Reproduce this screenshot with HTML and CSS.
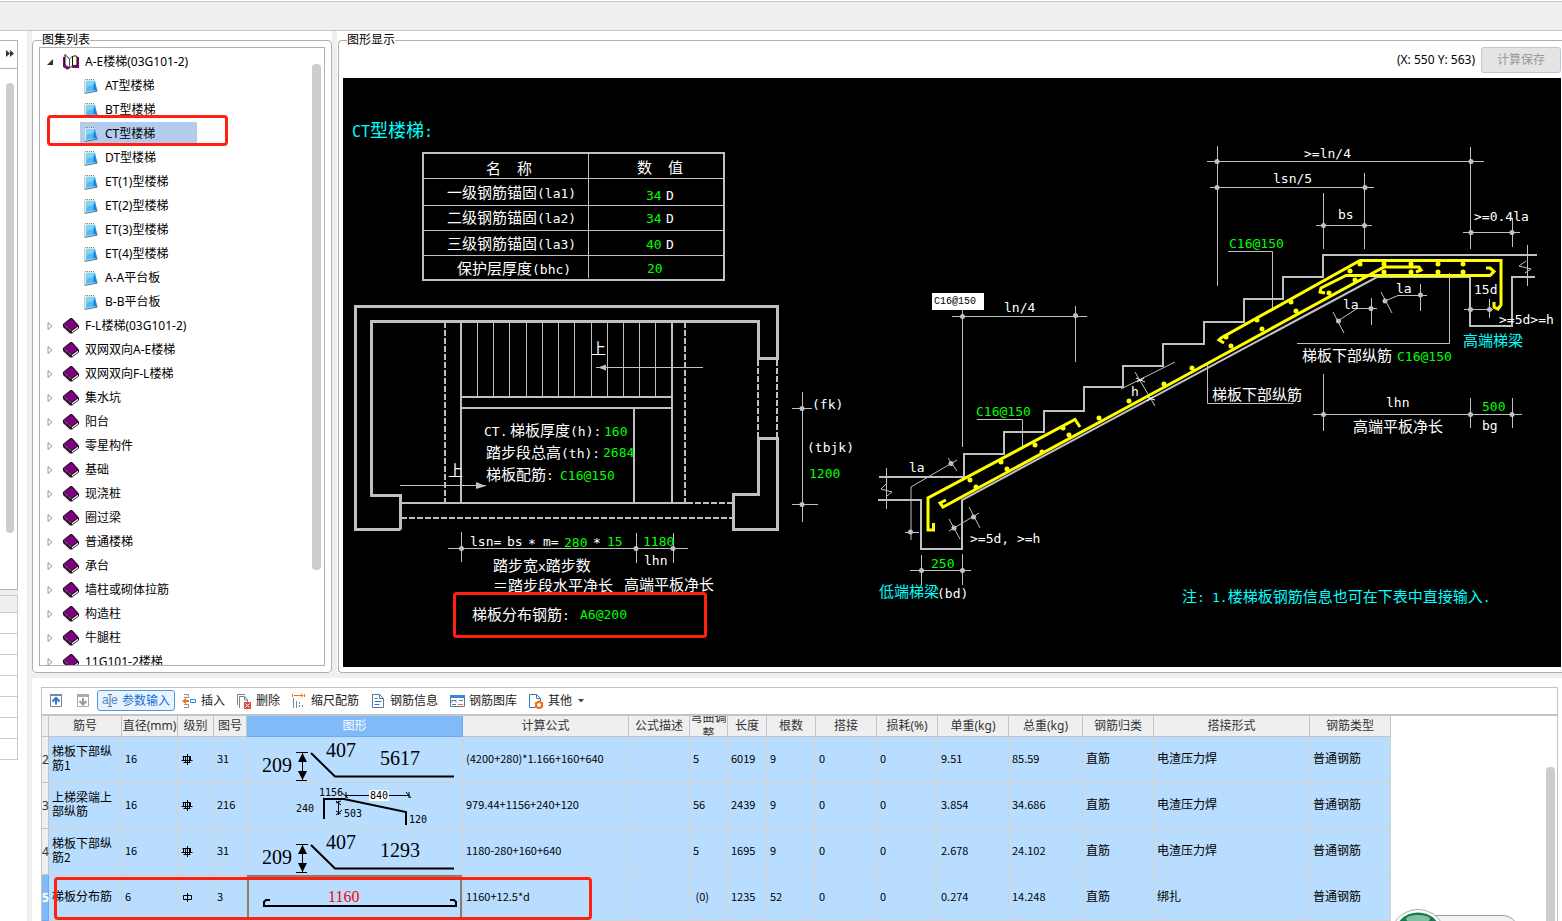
FILE: index.html
```html
<!DOCTYPE html>
<html lang="zh-CN">
<head>
<meta charset="utf-8">
<title>图集列表</title>
<link rel="stylesheet" href="styles.css">
</head>
<body>
<svg class="defs" aria-hidden="true">
  <symbol id="book" viewBox="0 0 16 16">
    <path d="M0 6L7.500 0h1.500L16 7.500v2.500l-7 5.500H7L0 9z" fill="#111"/>
    <path d="M1 6L8 .8l7 6.700-6.500 4.500z" fill="#800080"/>
    <path d="M1 7.500l7 6.500v1L1 8.800z" fill="#800080"/>
    <path d="M9 13l6-4.500v1.500L9 14.500z" fill="#fff"/>
    <path d="M1.500 7L8.500 13" stroke="#ccc" stroke-dasharray="1 1" fill="none"/>
  </symbol>
  <symbol id="bookopen" viewBox="0 0 16 16">
    <path d="M0 3h2v9l4 1 4-2 1 1h3V3h2v11h-6l-2-1-3 2.500H4L0 13z" fill="#800080"/>
    <path d="M2 .5L6.500 5v9L2 11z" fill="#fff" stroke="#111"/>
    <path d="M6.500 5q2-3 4-2.500v9.500q-2-.5-4 2z" fill="#fff" stroke="#555"/>
    <path d="M9.500 2.500q2.500-1.500 4.500 0v9.500q-2.500-1.500-4.500 0z" fill="#ffffc8" stroke="#111"/>
  </symbol>
  <symbol id="note" viewBox="0 0 14 16">
    <path d="M.5 1.500h10L13.500 12.500 1 15.500z" fill="#d5eaf2"/>
    <path d="M2.500 3h8.500l2 9.500L2 14z" fill="#4fbcf2"/>
    <path d="M2.500 3h8l.5 3-8.500 3z" fill="#86d3f5"/>
    <path d="M10.500 3l3 10-4.500-1.500z" fill="#2286d8"/>
    <path d="M.5 3v12" stroke="#b9d8b0"/>
    <path d="M1 1.500h10" stroke="#927d55" stroke-dasharray="1 1"/>
    <path d="M.5 15.300l3-.3 10-2" stroke="#447085" fill="none"/>
  </symbol>
  <symbol id="g3" viewBox="0 0 12 12"><path d="M2.500 3.500h7v4h-7zM.5 7.500h11M1.500 3.500h8M6.500 1v11M4.500 3v7M8.500 3v7M2.500 9.500h7" fill="none" stroke="#000"/></symbol>
  <symbol id="g1" viewBox="0 0 12 12"><path d="M2.500 4.500h8v4h-8zM6.500 2v9" fill="none" stroke="#000"/></symbol>
  <symbol id="slab" viewBox="0 0 215 45">
    <path d="M49 15.500h12M49 43.500h11M55.500 16v27" stroke="#000" fill="none"/>
    <path d="M55.500 16l4.500 9h-9zM55.500 43l4.500-9h-9z"/>
    <path d="M64 16l24 23.500h119" stroke="#000" stroke-width="2" fill="none"/>
  </symbol>
</svg>

<header class="topbar"></header>
<div class="workspace">
  <nav class="strip">
    <button class="expand" aria-label="展开"><svg width="8" height="7"><path d="M0 0l4 3.500L0 7zM4 0l4 3.500L4 7z" fill="#333"/></svg></button>
    <div class="striplist"><i class="thumb"></i></div>
    <div class="striprows"><i></i><i></i><i></i><i></i><i></i><i></i><i></i><i></i></div>
  </nav>
  <main class="main">
    <div class="upper">
      <aside class="side">
        <fieldset class="group">
          <legend>图集列表</legend>
          <div class="tree">
            <ul>
              <li class="open"><svg class="tw" viewBox="0 0 8 8"><path d="M7 1v6H1z" fill="#333"/></svg><svg class="bk"><use href="#bookopen"/></svg>A-E楼梯(03G101-2)</li>
              <li class="leaf"><svg><use href="#note"/></svg>AT型楼梯</li>
              <li class="leaf"><svg><use href="#note"/></svg>BT型楼梯</li>
              <li class="leaf selected"><svg><use href="#note"/></svg>CT型楼梯</li>
              <li class="leaf"><svg><use href="#note"/></svg>DT型楼梯</li>
              <li class="leaf"><svg><use href="#note"/></svg>ET(1)型楼梯</li>
              <li class="leaf"><svg><use href="#note"/></svg>ET(2)型楼梯</li>
              <li class="leaf"><svg><use href="#note"/></svg>ET(3)型楼梯</li>
              <li class="leaf"><svg><use href="#note"/></svg>ET(4)型楼梯</li>
              <li class="leaf"><svg><use href="#note"/></svg>A-A平台板</li>
              <li class="leaf"><svg><use href="#note"/></svg>B-B平台板</li>
              <li><svg class="tw" viewBox="0 0 8 8"><path d="M2 .5v7L6 4z" fill="none" stroke="#999"/></svg><svg class="bk"><use href="#book"/></svg>F-L楼梯(03G101-2)</li>
              <li><svg class="tw" viewBox="0 0 8 8"><path d="M2 .5v7L6 4z" fill="none" stroke="#999"/></svg><svg class="bk"><use href="#book"/></svg>双网双向A-E楼梯</li>
              <li><svg class="tw" viewBox="0 0 8 8"><path d="M2 .5v7L6 4z" fill="none" stroke="#999"/></svg><svg class="bk"><use href="#book"/></svg>双网双向F-L楼梯</li>
              <li><svg class="tw" viewBox="0 0 8 8"><path d="M2 .5v7L6 4z" fill="none" stroke="#999"/></svg><svg class="bk"><use href="#book"/></svg>集水坑</li>
              <li><svg class="tw" viewBox="0 0 8 8"><path d="M2 .5v7L6 4z" fill="none" stroke="#999"/></svg><svg class="bk"><use href="#book"/></svg>阳台</li>
              <li><svg class="tw" viewBox="0 0 8 8"><path d="M2 .5v7L6 4z" fill="none" stroke="#999"/></svg><svg class="bk"><use href="#book"/></svg>零星构件</li>
              <li><svg class="tw" viewBox="0 0 8 8"><path d="M2 .5v7L6 4z" fill="none" stroke="#999"/></svg><svg class="bk"><use href="#book"/></svg>基础</li>
              <li><svg class="tw" viewBox="0 0 8 8"><path d="M2 .5v7L6 4z" fill="none" stroke="#999"/></svg><svg class="bk"><use href="#book"/></svg>现浇桩</li>
              <li><svg class="tw" viewBox="0 0 8 8"><path d="M2 .5v7L6 4z" fill="none" stroke="#999"/></svg><svg class="bk"><use href="#book"/></svg>圈过梁</li>
              <li><svg class="tw" viewBox="0 0 8 8"><path d="M2 .5v7L6 4z" fill="none" stroke="#999"/></svg><svg class="bk"><use href="#book"/></svg>普通楼梯</li>
              <li><svg class="tw" viewBox="0 0 8 8"><path d="M2 .5v7L6 4z" fill="none" stroke="#999"/></svg><svg class="bk"><use href="#book"/></svg>承台</li>
              <li><svg class="tw" viewBox="0 0 8 8"><path d="M2 .5v7L6 4z" fill="none" stroke="#999"/></svg><svg class="bk"><use href="#book"/></svg>墙柱或砌体拉筋</li>
              <li><svg class="tw" viewBox="0 0 8 8"><path d="M2 .5v7L6 4z" fill="none" stroke="#999"/></svg><svg class="bk"><use href="#book"/></svg>构造柱</li>
              <li><svg class="tw" viewBox="0 0 8 8"><path d="M2 .5v7L6 4z" fill="none" stroke="#999"/></svg><svg class="bk"><use href="#book"/></svg>牛腿柱</li>
              <li><svg class="tw" viewBox="0 0 8 8"><path d="M2 .5v7L6 4z" fill="none" stroke="#999"/></svg><svg class="bk"><use href="#book"/></svg>11G101-2楼梯</li>
            </ul>
            <i class="thumb treethumb"></i>
            <i class="mark marktree"></i>
          </div>
        </fieldset>
      </aside>
      <section class="view">
        <fieldset class="group viewgroup">
          <legend>图形显示</legend>
          <div class="viewhead"><output>(X: 550 Y: 563)</output><button class="save" disabled>计算保存</button></div>
          <svg class="cad" viewBox="343 78 1218 589">
            <rect x="343" y="78" width="1218" height="589" fill="#000"/>
            <g class="w3">
              <path d="M400.500 529.500h-45v-223h422v52h-19v-37h-387v174h29v34"/>
              <path d="M758.500 438.500h19v91h-44v-35h25z"/>
            </g>
            <g class="w2">
              <path d="M423 153h301v127H423z"/>
              <path d="M461 322v180M672 322v180M461 397h211M461 408h211M634 408v94M401 503h286"/>
              <path d="M445 322v180M685 322v180M758 360v78M777 360v78M401 518h332M687 503h46" stroke-dasharray="6 2"/>
              <path d="M879 477h85v-23h40v-22h40v-21h40v-24h39v-21h40v-22h41v-22h40v-23h39v-22h40v-22h214"/>
              <path d="M878 500h43v49h41v-49L1377 277h93v49h42v-49h23"/>
            </g>
            <g class="w1">
              <path d="M588.500 153v125M424 178.500h299M424 205.500h299M424 230.500h299M424 255.500h299"/>
              <path d="M477.500 322v74M493.500 322v74M509.500 322v74M526.500 322v74M542.500 322v74M558.500 322v74M574.500 322v74M591.500 322v74M607.500 322v74M623.500 322v74M639.500 322v74M655.500 322v74"/>
              <path d="M596 367.500h107M400 485.500h86"/>
              <path d="M448 548.500h240M461.500 532v30M636.500 533v30M673.500 533v30"/>
              <path d="M802.500 392v130M792 408.500h20M792 504.500h26"/>
              <path d="M952 316.500h135M962.500 310v137M1075.500 306v56"/>
              <path d="M886.500 468v41M886 484l-5 5 11 3-5 4M1527.500 245v41M1526 261l-7 5 12 3-6 4"/>
              <path d="M957 460l-46 27v53M948 458l9 13M905 532.500h14"/>
              <path d="M977 419.500h45.500V446M1121 389l54-27M1135 372l20 34"/>
              <path d="M949 531l30-18M949 519l11 20M969 507l11 21"/>
              <path d="M910 570.500h61M921.500 555v30M962.500 554v31"/>
              <path d="M1207 161.500h277M1217.500 146v140M1470.500 147v102M1210 187.500h164M1364.500 173v76"/>
              <path d="M1316 225.500h56M1323.500 193v56M1463 232.500h57M1512.500 218v29"/>
              <path d="M1228 251.500h44.500V308M1464 309.500h29M1489.500 299v19"/>
              <path d="M1385 301l13-5.500h29M1381 292l11 21M1420.500 284v27"/>
              <path d="M1338 321l19-12.500h20M1333 312l11 21M1371.500 298v27"/>
              <path d="M1297 343.500h152.500V273M1207.500 365v38.500h86"/>
              <path d="M1313 414.500h209M1323.500 374v57M1470.500 398v30M1512.500 398v30"/>
            </g>
            <path class="dots" d="M461.500 548.500h0M636 548.500h0M673 548.500h0M802 408.500h0M802 504.500h0M962.500 316.500h0M1075.500 315.500h0M951 463.500h0M910.500 532h0M954 528h0M973.500 517h0M921.500 570.500h0M962.500 570.500h0M1217 161.500h0M1471 161.500h0M1217 187.500h0M1365 187.500h0M1323.500 225.500h0M1364.500 225.500h0M1471 232.500h0M1512 232.500h0M1470.500 309.500h0M1489.500 309.500h0M1385 301h0M1420.500 295h0M1338.500 321h0M1371 308.500h0M1323.500 414.500h0M1470.500 414.500h0M1512 414.500h0"/>
            <path class="arrows" d="M598 367.500l8-3v6zM486 486l-10-4v7z"/>
            <path d="M1136 378l9 4M1137 382l7-4M1146 397l9 3M1147 401l6-4" stroke="#fff" fill="none"/>
            <g class="bars">
              <path d="M933.500 523v7H928v-32l147-78.500 5 7.500"/>
              <path d="M946 500l-6 3 3 4 227-123 214-117h35l2 3-5 2"/>
              <path d="M1224 343l-5-3 2-2L1360 260.500h141V305l-3 4-4-2v-5"/>
              <path d="M1325 293l-5-1 1-4 25-12.500h144l4-4-4-3.500h-4"/>
            </g>
            <path class="studs" d="M970 480h0M1001 462h0M1035 445h0M1063 428h0M976 487h0M1007 469h0M1042 452h0M1069 435h0M1099 418h0M1129 401h0M1164 384h0M1192 368h0M1231 346h0M1262 329h0M1296 311h0M1329 293h0M1355 280h0M1226 337h0M1257 320h0M1291 302h0M1360 264h0M1350 271h0M1384 264h0M1384 272h0M1411 264h0M1411 272h0M1438 264h0M1438 272h0M1463 264h0M1463 272h0"/>

            <g class="cyan">
              <text class="big" x="352" y="137"><tspan class="bl">CT</tspan>型楼梯<tspan class="bl">:</tspan></text>
              <text x="1463" y="346">高端梯梁</text>
              <text x="879" y="597">低端梯梁</text>
              <text x="1182" y="602">注<tspan class="l">: </tspan></text>
              <text x="1212" y="602"><tspan class="l">1.</tspan>楼梯板钢筋信息也可在下表中直接输入<tspan class="l">.</tspan></text>
            </g>
            <g class="white">
              <text x="486" y="174">名</text><text x="517" y="174">称</text><text x="637" y="173">数</text><text x="668" y="173">值</text>
              <text x="447" y="198">一级钢筋锚固<tspan class="l">(la1)</tspan></text>
              <text x="447" y="223">二级钢筋锚固<tspan class="l">(la2)</tspan></text>
              <text x="447" y="249">三级钢筋锚固<tspan class="l">(la3)</tspan></text>
              <text x="457" y="274">保护层厚度<tspan class="l">(bhc)</tspan></text>
              <text x="591" y="354">上</text><text x="448" y="476">上</text>
              <text x="484" y="436"><tspan class="l">CT.</tspan></text>
              <text x="510" y="436">梯板厚度<tspan class="l">(h):</tspan></text>
              <text x="486" y="458">踏步段总高<tspan class="l">(th):</tspan></text>
              <text x="486" y="480">梯板配筋<tspan class="l">:</tspan></text>
              <text x="493" y="571">踏步宽<tspan class="l">x</tspan>踏步数</text>
              <text x="493" y="591">＝踏步段水平净长</text>
              <text x="624" y="590">高端平板净长</text>
              <text x="472" y="620">梯板分布钢筋<tspan class="l">:</tspan></text>
              <text x="1302" y="361">梯板下部纵筋</text>
              <text x="1212" y="400">梯板下部纵筋</text>
              <text x="1353" y="432">高端平板净长</text>
            </g>
            <g class="white latin">
              <text x="666" y="200">D</text><text x="666" y="223">D</text><text x="666" y="249">D</text>
              <text x="470" y="546">lsn=</text><text x="507" y="546">bs</text><text x="528" y="548">*</text><text x="543" y="546">m=</text><text x="593" y="547">*</text><text x="644" y="565">lhn</text>
              <text x="812" y="409">(fk)</text><text x="807" y="452">(tbjk)</text>
              <text x="1004" y="312">ln/4</text><text x="909" y="472">la</text><text x="1131" y="396">h</text>
              <text x="970" y="543">&gt;=5d, &gt;=h</text><text x="937" y="598">(bd)</text>
              <text x="1304" y="158">&gt;=ln/4</text><text x="1273" y="183">lsn/5</text><text x="1338" y="219">bs</text><text x="1474" y="221">&gt;=0.4la</text>
              <text x="1474" y="294">15d</text><text x="1499" y="324">&gt;=5d&gt;=h</text><text x="1396" y="293">la</text><text x="1343" y="309">la</text>
              <text x="1386" y="407">lhn</text><text x="1482" y="430">bg</text>
            </g>
            <g class="green latin">
              <text x="646" y="200">34</text><text x="646" y="223">34</text><text x="646" y="249">40</text><text x="647" y="273">20</text>
              <text x="604" y="436">160</text><text x="603" y="457">2684</text><text x="560" y="480">C16@150</text>
              <text x="564" y="547">280</text><text x="607" y="546">15</text><text x="643" y="546">1180</text>
              <text x="580" y="619">A6@200</text><text x="809" y="478">1200</text>
              <text x="976" y="416">C16@150</text><text x="931" y="568">250</text>
              <text x="1229" y="248">C16@150</text><text x="1397" y="361">C16@150</text><text x="1482" y="411">500</text>
            </g>
            <rect x="454.500" y="593.500" width="251" height="43" rx="2" fill="none" stroke="#ff2010" stroke-width="3"/>
            <foreignObject x="932" y="293" width="52" height="17"><input class="cadinput" aria-label="配筋" value="C16@150"></foreignObject>
          </svg>
        </fieldset>
      </section>
    </div>
    <section class="lower">
      <div class="gridbox">
        <div class="toolbar">
          <button aria-label="上移"><svg viewBox="0 0 16 16"><path d="M2.500 1.500h11v12h-11z" fill="#fff" stroke="#7d8a99"/><path d="M2 1h12v2H2z" fill="#7d8a99"/><path d="M8 11.500V6M4.500 8.500L8 5l3.500 3.500" stroke="#2878d0" stroke-width="2" fill="none"/></svg></button>
          <button aria-label="下移"><svg viewBox="0 0 16 16"><path d="M2.500 1.500h11v12h-11z" fill="#fff" stroke="#aaa"/><path d="M2 1h12v3H2z" fill="#aaa"/><path d="M8 5v6M4.500 8L8 11.500 11.500 8" stroke="#999" stroke-width="2" fill="none"/></svg></button>
          <button class="on"><svg viewBox="0 0 16 16"><text x="0" y="11" class="ae">a</text><text x="9" y="11" class="ae">e</text><path d="M6 1.500h1.500l.5.500.5-.5H10M8 2v11M6 13.500h1.500L8 13l.5.500H10" stroke="#667" fill="none"/></svg>参数输入</button>
          <button><svg viewBox="0 0 16 16"><path d="M3 1.500h4.500v3H3M3 14.500h4.500v-3H3" stroke="#8793a0" fill="none"/><path d="M1 8l4-3v2h3v2H5v2z" fill="#f07020"/><path d="M9.500 6.500h5v3h-5z" fill="#fff" stroke="#3a85d5"/></svg>插入</button>
          <button><svg viewBox="0 0 16 16"><path d="M1.500 12V1.500H9M4 14.500h-.5v-11h5l3 3V9M8.500 4v3h3" stroke="#778390" fill="none"/><path d="M8 9h7v7H8z" fill="#d84848"/><path d="M9.500 10.500l4 4m0-4l-4 4" stroke="#fff"/></svg>删除</button>
          <button><svg viewBox="0 0 16 16"><path d="M3 2.500h9M10 .5l2 2-2 2" stroke="#f07020" fill="none"/><path d="M1.500 1v3M13.500 1v3" stroke="#f07020"/><path d="M2.500 5v10M5.500 8v7" stroke="#778390"/><path d="M8.500 9v6M11.500 12v3" stroke="#778390" stroke-dasharray="2 1"/></svg>缩尺配筋</button>
          <button><svg viewBox="0 0 16 16"><path d="M2.500 1.500h7l4 4v9h-11zM9.500 1.500v4h4" stroke="#607790" fill="#fff"/><path d="M4.500 5.500h3M4.500 8.500h7M4.500 11.500h5" stroke="#2878d0"/></svg>钢筋信息</button>
          <button><svg viewBox="0 0 16 16"><path d="M1.500 2.500h14v11h-14z" fill="#fff" stroke="#4a7ab0"/><path d="M1 2h15v3H1z" fill="#3a85d5"/><path d="M3 9.500v-2h4v2M10 7.500h4" stroke="#4a7ab0" fill="none"/><path d="M3 11.500h4" stroke="#3a3"/><path d="M9 11.500h5" stroke="#f07020"/></svg>钢筋图库</button>
          <button><svg viewBox="0 0 16 16"><path d="M7 14.500H1.500v-13h7l4 4V8M8.500 1.500v4h4" stroke="#3878c0" fill="#fff"/><circle cx="11" cy="12" r="3" fill="#fff" stroke="#f07020" stroke-width="2"/><path d="M11 7.500v2M11 14.500v2M7 9.800l2 1M13 13l2 1M7 14.200l2-1M13 11l2-1" stroke="#f07020" stroke-width="2"/></svg>其他<svg class="caret" viewBox="0 0 6 4"><path d="M0 0h6L3 3.500z" fill="#444"/></svg></button>
        </div>
        <table>
          <colgroup><col><col><col><col><col><col><col><col><col><col><col><col><col><col><col><col><col><col></colgroup>
          <thead><tr><th></th><th>筋号</th><th>直径(mm)</th><th>级别</th><th>图号</th><th class="on">图形</th><th>计算公式</th><th>公式描述</th><th><div>弯曲调整</div></th><th>长度</th><th>根数</th><th>搭接</th><th>损耗(%)</th><th>单重(kg)</th><th>总重(kg)</th><th>钢筋归类</th><th>搭接形式</th><th>钢筋类型</th></tr></thead>
          <tbody>
            <tr><th>2</th><td class="name">梯板下部纵筋1</td><td>16</td><td><svg class="grade"><use href="#g3"/></svg></td><td>31</td><td class="shape"><svg viewBox="0 0 215 45"><use href="#slab"/><text x="15" y="35">209</text><text x="79" y="20">407</text><text x="133" y="28">5617</text></svg></td><td>(4200+280)*1.166+160+640</td><td></td><td>5</td><td>6019</td><td>9</td><td>0</td><td>0</td><td>9.51</td><td>85.59</td><td class="name">直筋</td><td class="name">电渣压力焊</td><td class="name">普通钢筋</td></tr>
            <tr><th>3</th><td class="name">上梯梁端上部纵筋</td><td>16</td><td><svg class="grade"><use href="#g3"/></svg></td><td>216</td><td class="shape"><svg class="small" viewBox="0 0 215 45"><path d="M77 36V16h20l62 13v13" stroke="#000" stroke-width="2" fill="none"/><path d="M98 12.500h64M95 10l6 5M99 9v6M159 9l5 6M162 15v-6M91.500 18v14M89 20l5-2M89 32l6-5M89 28l5 3M89 18l5 4" stroke="#000" fill="none"/><rect x="122" y="7" width="20" height="11" fill="#fff"/><text x="72" y="13">1156</text><text x="123" y="16">840</text><text x="49" y="29">240</text><text x="97" y="34">503</text><text x="162" y="40">120</text></svg></td><td>979.44+1156+240+120</td><td></td><td>56</td><td>2439</td><td>9</td><td>0</td><td>0</td><td>3.854</td><td>34.686</td><td class="name">直筋</td><td class="name">电渣压力焊</td><td class="name">普通钢筋</td></tr>
            <tr><th>4</th><td class="name">梯板下部纵筋2</td><td>16</td><td><svg class="grade"><use href="#g3"/></svg></td><td>31</td><td class="shape"><svg viewBox="0 0 215 45"><use href="#slab"/><text x="15" y="35">209</text><text x="79" y="20">407</text><text x="133" y="28">1293</text></svg></td><td>1180-280+160+640</td><td></td><td>5</td><td>1695</td><td>9</td><td>0</td><td>0</td><td>2.678</td><td>24.102</td><td class="name">直筋</td><td class="name">电渣压力焊</td><td class="name">普通钢筋</td></tr>
            <tr><th class="on">5</th><td class="name">梯板分布筋</td><td>6</td><td><svg class="grade"><use href="#g1"/></svg></td><td>3</td><td class="shape focus"><svg class="red" viewBox="0 0 215 45"><path d="M23 25h-4l-2 2v4h192v-4l-2-2h-4" stroke="#000" stroke-width="2" fill="none"/><text x="81" y="27">1160</text></svg></td><td>1160+12.5*d</td><td></td><td>&nbsp;(0)</td><td>1235</td><td>52</td><td>0</td><td>0</td><td>0.274</td><td>14.248</td><td class="name">直筋</td><td class="name">绑扎</td><td class="name">普通钢筋</td></tr>
          </tbody>
        </table>
        <i class="thumb gridthumb"></i>
        <i class="mark markgrid"></i>
      </div>
      <svg class="ball" viewBox="0 0 130 12">
        <path d="M30 6.500h77q8 0 13 6H30z" fill="#f3f3f3" stroke="#999"/>
        <circle cx="23" cy="28" r="27.500" fill="#fff" stroke="#aaa"/>
        <circle cx="23" cy="28" r="24.500" fill="#157a50"/>
        <ellipse cx="23" cy="10" rx="12" ry="4" fill="#7fc0a0"/>
      </svg>
    </section>
  </main>
</div>
</body>
</html>
```
FILE: styles.css
```css
* { box-sizing: border-box; }
body {
  margin: 0;
  height: 100vh;
  overflow: hidden;
  display: flex;
  flex-direction: column;
  background: #efefef;
  color: #000;
  font: 12px/14px "Noto Sans", "Noto Sans CJK SC", sans-serif;
}
button, input { font: inherit; }
.defs { position: absolute; width: 0; height: 0; }

.topbar {
  flex: none;
  height: 31px;
  border-top: 1px solid #fff;
  border-bottom: 1px solid #c3c3c8;
  box-shadow: inset 0 1px #c3c3c8;
}
.workspace { flex: 1; min-height: 0; display: flex; gap: 5px; }

.strip {
  flex: none;
  width: 27px;
  padding: 9px 9px 0 0;
  background: #fff;
  display: flex;
  flex-direction: column;
}
.expand {
  height: 29px;
  padding: 0 3px 4px 0;
  border: 1px solid #b4b4b4;
  border-left: 0;
  background: #fff;
  text-align: right;
}
.striplist {
  height: 521px;
  padding: 14px 3px 0 6px;
  border: 1px solid #b4b4b4;
  border-width: 0 1px 1px 0;
}
.thumb { display: block; width: 9px; background: #cdcdcd; border-radius: 4px; }
.striplist .thumb { width: 8px; height: 450px; }
.striprows { border-top: 5px solid #efefef; }
.striprows i {
  display: block;
  height: 21px;
  border: 1px solid #ccc;
  border-width: 0 1px 1px 0;
}
.striprows i:first-child { height: 18px; background: #efefef; border-top-width: 1px; }

.main { flex: 1; min-width: 0; display: flex; flex-direction: column; gap: 5px; }
.upper { flex: none; display: grid; grid-template-columns: 300px 1fr; gap: 5px; }
.side, .view { background: #fff; padding-top: 2px; display: flex; flex-direction: column; }
.side { contain: size; }
.view { padding-left: 1px; }
.group {
  flex: 1;
  min-width: 0;
  min-height: 0;
  margin: 0;
  padding: 0 6px 6px;
  border: 1px solid #b0b0b0;
  border-radius: 4px;
  display: flex;
  flex-direction: column;
}
.group legend { margin-left: 3px; padding: 0; line-height: 14px; }
.viewgroup { padding: 0 1px 5px 4px; border-right: 0; border-radius: 4px 0 0 4px; }
.viewgroup legend { margin-left: 4px; }

.tree {
  flex: 1;
  min-height: 0;
  position: relative;
  overflow: hidden;
  border: 1px solid #b0b0b0;
}
.tree ul { margin: 0; padding: 2px 0 0; list-style: none; }
.tree li { height: 24px; padding-left: 6px; display: flex; align-items: center; }
.tw { width: 8px; height: 8px; margin-right: 9px; }
.bk { width: 16px; height: 16px; margin-right: 6px; }
.tree .leaf { width: 117px; margin-left: 40px; padding-left: 4px; white-space: nowrap; }
.leaf svg { width: 14px; height: 16px; margin-right: 7px; }
.selected { background: #b3ccee; }
.treethumb { position: absolute; top: 16px; right: 3px; height: 506px; }
.mark { position: absolute; border: 3px solid #ff2010; border-radius: 4px; }
.marktree { left: 7px; top: 67px; width: 181px; height: 31px; }

.viewhead {
  display: flex;
  justify-content: flex-end;
  align-items: center;
  gap: 6px;
  padding-bottom: 5px;
}
.save {
  width: 80px;
  height: 26px;
  border: 1px solid #bcc6d4;
  border-radius: 3px;
  background: #e4e4e4;
  color: #999;
}
.cad { display: block; width: 100%; }
.cad text { font: 15px "Noto Sans CJK SC", sans-serif; }
.cad .l, .cad .latin text { font: 13px "DejaVu Sans Mono", monospace; }
.cad .big { font-size: 18px; }
.cad .bl { font: 15px "DejaVu Sans Mono", monospace; }
.cyan { fill: #0ff; }
.white { fill: #fff; }
.green { fill: #0f0; }
.w1, .w2, .w3 { fill: none; stroke: #c0c0c0; }
.w2 { stroke-width: 2px; }
.w3 { stroke-width: 3px; }
.dots { stroke: #c0c0c0; stroke-width: 5px; stroke-linecap: round; }
.arrows { fill: #c0c0c0; }
.bars { fill: none; stroke: #ff0; stroke-width: 3px; }
.studs { stroke: #ff0; stroke-width: 5px; stroke-linecap: round; }
.cadinput {
  display: block;
  width: 100%;
  height: 17px;
  padding: 0 2px;
  border: 0;
  background: #fff;
  font: 10px "Liberation Mono", monospace;
}

.lower {
  flex: 1;
  min-height: 0;
  position: relative;
  padding: 9px 4px 0 9px;
  background: #fff;
  overflow: hidden;
}
.gridbox { position: relative; height: 100%; border: 1px solid #c3c3c8; border-bottom: 0; overflow: hidden; }
.toolbar {
  height: 28px;
  padding: 2px 1px 0;
  border-bottom: 2px solid #c3c3c8;
  display: flex;
  align-items: flex-start;
  gap: 1px;
}
.toolbar button {
  height: 21px;
  padding: 0 4px;
  border: 1px solid transparent;
  border-radius: 3px;
  background: none;
  color: #222;
  display: flex;
  align-items: center;
  gap: 4px;
  white-space: nowrap;
}
.toolbar svg { width: 16px; height: 16px; }
.toolbar .caret { width: 6px; height: 4px; margin-left: 2px; }
.toolbar .on { border-color: #4a98ea; background: #e8f3fd; color: #1470d8; }
.ae { font: 12px "Liberation Sans", sans-serif; fill: #4a8ac8; }

table { table-layout: fixed; width: 1349px; border-collapse: separate; border-spacing: 0; }
col:nth-child(1) { width: 7px; }
col:nth-child(2) { width: 73px; }
col:nth-child(3) { width: 56px; }
col:nth-child(4) { width: 36px; }
col:nth-child(5) { width: 33px; }
col:nth-child(6) { width: 216px; }
col:nth-child(7) { width: 166px; }
col:nth-child(8) { width: 61px; }
col:nth-child(9) { width: 38px; }
col:nth-child(10) { width: 39px; }
col:nth-child(11) { width: 49px; }
col:nth-child(12), col:nth-child(13) { width: 61px; }
col:nth-child(14) { width: 71px; }
col:nth-child(15) { width: 74px; }
col:nth-child(16) { width: 71px; }
col:nth-child(17) { width: 156px; }
col:nth-child(18) { width: 81px; }
th {
  padding: 0;
  background: #efefef;
  border: 1px solid #c3c3c8;
  border-width: 0 1px 1px 0;
  color: #333;
  font-weight: normal;
  white-space: nowrap;
}
thead th { height: 21px; }
thead div { height: 20px; line-height: 16px; overflow: hidden; white-space: normal; display: flex; align-items: center; }
tbody th { text-align: left; }
th.on { background: #80baf9; border-color: #6faaf0; color: #fff; }
tbody th.on { font-weight: bold; }
td {
  height: 46px;
  padding: 0 0 4px 3px;
  background: #b8ddff;
  border: 1px solid #d2d2d2;
  border-width: 0 1px 1px 0;
  font-family: "Noto Sans CJK SC", sans-serif;
  font-size: 11px;
  white-space: nowrap;
}
td.name { font-size: 12px; white-space: normal; }
td.shape { padding: 0; }
.shape svg { display: block; width: 100%; height: 45px; }
.shape text { font: 20px "Liberation Serif", serif; }
.shape .small text { font: 10px "DejaVu Sans Mono", monospace; }
.shape .red text { font-size: 16px; fill: #f00; }
.focus { box-shadow: inset 0 0 0 2px #808080; }
.grade { display: block; width: 12px; height: 12px; margin-top: 2px; }
.gridthumb { position: absolute; top: 79px; right: 2px; height: 200px; }
.markgrid { left: 12px; top: 189px; width: 538px; height: 43px; }
.ball { position: absolute; right: 37px; bottom: 0; width: 130px; height: 12px; }
```
